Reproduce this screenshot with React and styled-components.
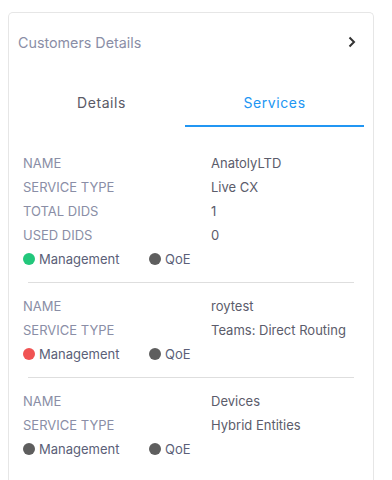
import styled, { createGlobalStyle } from "styled-components";

const GlobalStyle = createGlobalStyle`
  body {
    margin: 0;
    background: #fff;
    font-family: Inter, "Noto Sans", sans-serif;
  }
`;

const Page = styled.div`
  padding: 12px 18px 0 8px;
`;

const Card = styled.div`
  border: 1px solid #e6e6e6;
  border-bottom: none;
  border-radius: 5px 5px 0 0;
  height: 480px;
  background: #fff;
`;

const Header = styled.div`
  height: 58px;
  display: flex;
  align-items: center;
  justify-content: space-between;
  padding: 0 16px 0 9px;
`;

const HeaderTitle = styled.div`
  font-size: 14.3px;
  color: #8a8ea6;
`;

const Tabs = styled.div`
  display: grid;
  grid-template-columns: 167px 179px;
  margin: 8px 0 0 9px;
`;

const Tab = styled.div`
  height: 48px;
  display: flex;
  align-items: center;
  justify-content: center;
  font-size: 14px;
  letter-spacing: 0.6px;
  color: ${(p) => (p.active ? "#2196f3" : "#5a5a66")};
  border-bottom: 2px solid ${(p) => (p.active ? "#2196f3" : "transparent")};
  box-sizing: border-box;
`;

const Content = styled.div`
  padding-top: 24px;
`;

const Section = styled.div`
  padding-left: 14px;
`;

const Row = styled.div`
  display: grid;
  grid-template-columns: 188px 1fr;
  height: 24px;
  align-items: center;
  font-size: 13px;
`;

const Label = styled.div`
  color: #8a8ea6;
`;

const Value = styled.div`
  color: #5b5c6b;
`;

const StatusRow = styled.div`
  display: flex;
  height: 24px;
  align-items: center;
  font-size: 13px;
  color: #5b5f78;
`;

const StatusItem = styled.div`
  display: flex;
  align-items: center;
  gap: 4px;
  width: ${(p) => p.width || "auto"};
`;

const Dot = styled.span`
  width: 12px;
  height: 12px;
  border-radius: 50%;
  background: ${(p) => p.color};
`;

const Divider = styled.div`
  height: 1px;
  background: #dedede;
  margin: 11px 19px;
`;

const colors = { green: "#22c77b", red: "#f05353", grey: "#5e5e5e" };

const services = [
  {
    rows: [
      ["NAME", "AnatolyLTD"],
      ["SERVICE TYPE", "Live CX"],
      ["TOTAL DIDS", "1"],
      ["USED DIDS", "0"],
    ],
    management: "green",
  },
  {
    rows: [
      ["NAME", "roytest"],
      ["SERVICE TYPE", "Teams: Direct Routing"],
    ],
    management: "red",
  },
  {
    rows: [
      ["NAME", "Devices"],
      ["SERVICE TYPE", "Hybrid Entities"],
    ],
    management: "grey",
  },
];

export default function App() {
  return (
    <>
      <GlobalStyle />
      <Page>
        <Card>
          <Header>
            <HeaderTitle>Customers Details</HeaderTitle>
            <svg width="10" height="12" viewBox="0 0 10 12">
              <polyline
                points="2.5,1.5 7,6 2.5,10.5"
                fill="none"
                stroke="#333"
                strokeWidth="2"
              />
            </svg>
          </Header>
          <Tabs>
            <Tab>Details</Tab>
            <Tab active>Services</Tab>
          </Tabs>
          <Content>
            {services.map((s, i) => (
              <div key={i}>
                {i > 0 && <Divider />}
                <Section>
                  {s.rows.map(([l, v]) => (
                    <Row key={l}>
                      <Label>{l}</Label>
                      <Value>{v}</Value>
                    </Row>
                  ))}
                  <StatusRow>
                    <StatusItem width="126px">
                      <Dot color={colors[s.management]} />
                      Management
                    </StatusItem>
                    <StatusItem>
                      <Dot color={colors.grey} />
                      QoE
                    </StatusItem>
                  </StatusRow>
                </Section>
              </div>
            ))}
          </Content>
        </Card>
      </Page>
    </>
  );
}
